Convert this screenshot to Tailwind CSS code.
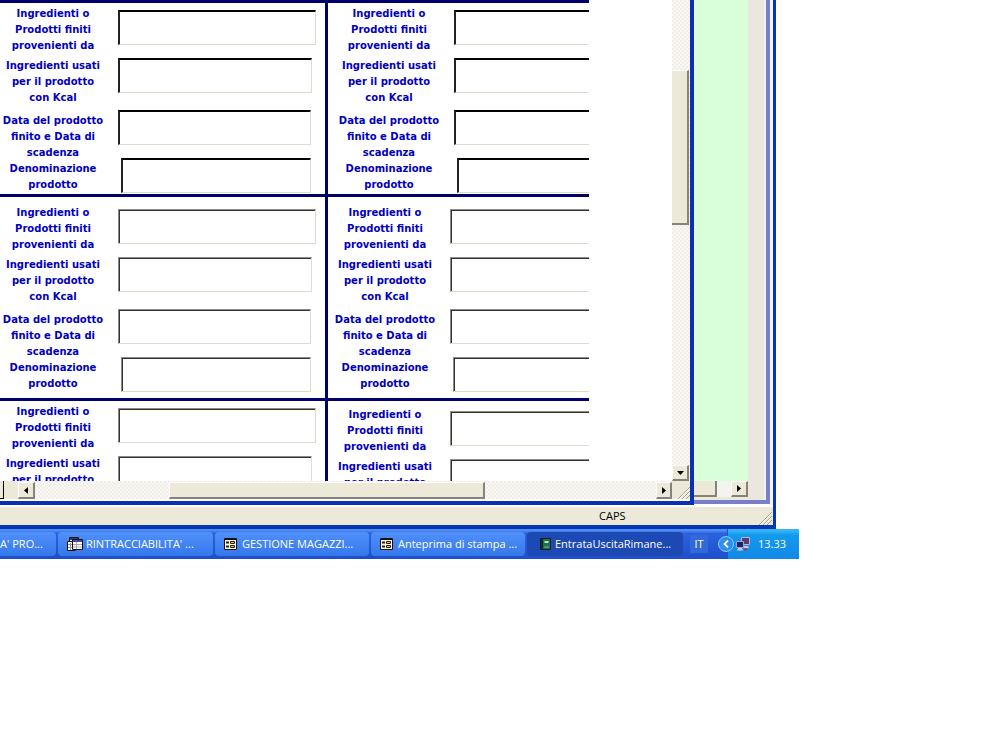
<!DOCTYPE html>
<html lang="it">
<head>
    <meta charset="UTF-8">
    <meta name="viewport" content="width=device-width, initial-scale=1.0">
    <title>EntrataUscitaRimanenze</title>
    <script src="https://cdn.jsdelivr.net/npm/@tailwindcss/browser@4"></script>
</head>
<body class="bg-white font-['Open_Sans',sans-serif] text-[11px] leading-4">

    <!-- Main window -->
    <div class="w-[77.6%] bg-white border-r-[3px] border-b-4 border-[#0536b4]">
        <div class="flex">

            <!-- Print preview window -->
            <div class="w-[89.8%] shrink-0 bg-white border-r-4 border-b-4 border-[#0a32b0]">
                <div class="flex h-[481px] overflow-hidden">
                    <div class="flex flex-1 overflow-hidden">
                        <div id="col-left" class="w-[328px] shrink-0 border-r-[3px] border-[#00006c]"></div>
                        <div id="col-right" class="w-[261px] shrink-0 overflow-hidden"></div>
                    </div>
                    <div class="w-[18px] pr-px flex flex-col bg-[repeating-conic-gradient(#f9f8f5_0_25%,#f0eee6_0_50%)] bg-size-[4px_4px]">
                        <div class="h-[70px]"></div>
                        <div class="h-[155px] bg-[#ece9d8] border-t border-t-white border-r-2 border-r-[#85837a] border-b-2 border-b-[#85837a]"></div>
                        <div class="flex-1"></div>
                        <button aria-label="Scorri in basso" class="h-4 bg-[#ece9d8] border-t border-t-white border-l border-l-white border-r-2 border-r-[#85837a] border-b-2 border-b-[#85837a] flex items-center justify-center">
                            <svg width="7" height="4" viewBox="0 0 7 4"><path d="M0 0h7L3.500 4z" fill="#000"/></svg>
                        </button>
                    </div>
                </div>
                <div class="flex h-[18px] bg-[repeating-conic-gradient(#f9f8f5_0_25%,#f0eee6_0_50%)] bg-size-[4px_4px]">
                    <div class="w-1 border-r border-b border-black bg-[#ece9d8]"></div>
                    <div class="w-[14px] bg-[#ece9d8]"></div>
                    <button aria-label="Scorri a sinistra" class="w-[17px] mt-px bg-[#ece9d8] border-t border-t-white border-l border-l-white border-r-2 border-r-[#85837a] border-b-2 border-b-[#85837a] flex items-center justify-center">
                        <svg width="4" height="7" viewBox="0 0 4 7"><path d="M4 0v7L0 3.500z" fill="#000"/></svg>
                    </button>
                    <div class="w-[134px]"></div>
                    <div class="w-[316px] mt-px bg-[#ece9d8] border-l border-l-white border-t border-t-white border-r-2 border-r-[#85837a] border-b-2 border-b-[#85837a]"></div>
                    <div class="flex-1"></div>
                    <button aria-label="Scorri a destra" class="w-4 mt-px bg-[#ece9d8] border-t border-t-white border-l border-l-white border-r-2 border-r-[#85837a] border-b-2 border-b-[#85837a] flex items-center justify-center">
                        <svg width="4" height="7" viewBox="0 0 4 7"><path d="M0 0v7l4-3.500z" fill="#000"/></svg>
                    </button>
                    <div class="w-[18px] bg-[#ece9d8] flex items-end justify-end">
                        <svg width="13" height="13" viewBox="0 0 13 13" fill="none"><path d="M1 13L13 1M5 13l8-8M9 13l4-4" stroke="#a5a292"/><path d="M2 13L13 2M6 13l7-7" stroke="#fff"/></svg>
                    </div>
                </div>
                <div class="h-[2px] bg-white"></div>
            </div>

            <!-- Form behind the preview -->
            <div class="flex-1 flex flex-col">
                <div class="flex-1 flex border-r-4 border-b-4 border-[#7a80c8]">
                    <div class="flex-1 flex flex-col bg-[#ece9d8]">
                        <div class="h-[481px] bg-[#d8ffd9]"></div>
                        <div class="h-4 flex bg-[#f4f3ee]">
                            <div class="w-[23px] bg-[#ece9d8] border-r-2 border-b-2 border-[#85837a]"></div>
                            <div class="flex-1"></div>
                            <button aria-label="Scorri a destra" class="w-[17px] bg-[#ece9d8] border-t border-t-white border-l border-l-white border-r-2 border-r-[#85837a] border-b-2 border-b-[#85837a] flex items-center justify-center">
                                <svg width="4" height="7" viewBox="0 0 4 7"><path d="M0 0v7l4-3.500z" fill="#000"/></svg>
                            </button>
                        </div>
                    </div>
                    <div class="w-4 bg-[#ebe7dc]"></div>
                    <div class="w-[2px] bg-[#f0effa]"></div>
                </div>
                <div class="h-px"></div>
            </div>
            <div class="w-[3px] bg-[#f4f6ff]"></div>
        </div>

        <!-- Status bar -->
        <div class="mt-[2px] h-[18px] bg-[#ece9d8] flex items-center">
            <span class="flex-1"></span>
            <span class="w-[159px] text-black">CAPS</span>
            <svg class="self-end" width="14" height="14" viewBox="0 0 14 14" fill="none"><path d="M1 14L14 1M5 14l9-9M9 14l5-5" stroke="#a5a292"/><path d="M2 14L14 2M6 14l8-8" stroke="#fff"/></svg>
            <span class="w-px"></span>
        </div>
    </div>

    <!-- Taskbar -->
    <div class="w-[79.9%] h-[30px] flex items-stretch text-white bg-linear-to-b from-[#4f8cf0] from-5% via-[#2a62de] via-15% to-[#1d4fcb] whitespace-nowrap">
        <button class="w-[56px] my-[3px] mr-[2px] rounded-r-sm bg-linear-to-b from-[#4f90fa] to-[#3578ec] text-left">A' PRO...</button>
        <button class="w-[155px] my-[3px] mr-[2px] pl-[9px] rounded-sm bg-linear-to-b from-[#4f90fa] to-[#3578ec] flex items-center gap-[3px]">
            <svg width="16" height="16" viewBox="0 0 16 16"><path d="M2.500 1.500h9v9h-9z" fill="#fff" stroke="#111"/><path d="M3 2h8v2H3z" fill="#223a90"/><path d="M.5 5.500h8v9h-8z" fill="#fff" stroke="#111"/><path d="M1 8.500h7M1 11.500h7M3.500 7v7" stroke="#999"/><path d="M5.500 3.500h10v10h-10z" fill="#fff" stroke="#111"/><path d="M6 4h9v2H6z" fill="#3a4fa0"/><path d="M6 8.500h9M6 11h9M9.500 6v7" stroke="#aaa"/></svg>
            RINTRACCIABILITA' ...
        </button>
        <button class="w-[154px] my-[3px] mr-[2px] pl-[9px] rounded-sm bg-linear-to-b from-[#4f90fa] to-[#3578ec] flex items-center gap-[4px]">
            <svg width="14" height="14" viewBox="0 0 14 14"><path d="M.5 1.500h12v11H.5z" fill="#fff6dc" stroke="#111"/><path d="M1 1h11v2H1z" fill="#111"/><path d="M2 5.500h3M2 9.500h3" stroke="#222" stroke-width="2"/><path d="M6.500 4.500h4v2h-4zM6.500 8.500h4v2h-4z" fill="#d8c070" stroke="#222"/></svg>
            GESTIONE MAGAZZI...
        </button>
        <button class="w-[154px] my-[3px] mr-[2px] pl-[9px] rounded-sm bg-linear-to-b from-[#4f90fa] to-[#3578ec] flex items-center gap-[4px]">
            <svg width="14" height="14" viewBox="0 0 14 14"><path d="M.5 1.500h12v11H.5z" fill="#fff6dc" stroke="#111"/><path d="M1 1h11v2H1z" fill="#111"/><path d="M2 5.500h3M2 9.500h3" stroke="#222" stroke-width="2"/><path d="M6.500 4.500h4v2h-4zM6.500 8.500h4v2h-4z" fill="#d8c070" stroke="#222"/></svg>
            Anteprima di stampa ...
        </button>
        <button class="w-[156px] my-[3px] pl-[13px] rounded-sm bg-[#1c49b4] flex items-center gap-[4px]">
            <svg width="11" height="12" viewBox="0 0 11 12"><path d="M.5.5h10v11H.5z" fill="#187058" stroke="#0a1a20"/><path d="M2 1v10" stroke="#0a1a20" stroke-width="1.500"/><path d="M4.500 3h4v2h-4z" fill="#b8e8b0"/><path d="M4 9h5" stroke="#5fc090"/></svg>
            EntrataUscitaRimane...
        </button>
        <div class="flex-1"></div>
        <div class="w-[18px] my-[6px] bg-[#3468d8] flex items-center justify-center">IT</div>
        <div class="w-[19px]"></div>
        <div class="relative w-[72px] bg-linear-to-b from-[#35b4f8] from-5% via-[#129aee] via-20% to-[#1388e6] border-l border-[#0f5cc4] flex items-center">
            <button aria-label="Mostra icone nascoste" class="absolute -left-[10px] top-[7px] w-4 h-4 rounded-full bg-[#2f8ff0] border border-[#8cc8ff] flex items-center justify-center">
                <svg width="6" height="8" viewBox="0 0 6 8" fill="none"><path d="M5 .5L1.500 4L5 7.500" stroke="#fff" stroke-width="1.800"/></svg>
            </button>
            <svg class="ml-[7px]" width="16" height="15" viewBox="0 0 16 15"><path d="M6.500.5h8v7h-8z" fill="#5a3a78" stroke="#b8b8d0"/><path d="M9 9h4l1 2H8z" fill="#c8c8d8"/><path d="M1.500 4.500h7v6h-7z" fill="#20206c" stroke="#a0a0c0"/><path d="M3 11h4l1 2.500H2z" fill="#c8c8d8"/><path d="M9 12l3-1v2l-3 1z" fill="#b03050"/></svg>
            <span class="ml-[7px]">13.33</span>
        </div>
    </div>

    <script>
        const fields = [
            { lines: "Ingredienti o<br>Prodotti finiti<br>provenienti da", label: "h-[52px]", input: "mt-[4px] ml-[12px] w-[198px]" },
            { lines: "Ingredienti usati<br>per il prodotto<br>con Kcal", label: "h-[52px]", input: "ml-[12px] w-[194px]" },
            { lines: "Data del prodotto<br>finito e Data di<br>scadenza", label: "h-[48px] pt-[3px]", input: "ml-[12px] w-[193px]" },
            { lines: "Denominazione<br>prodotto", label: "h-[35px] pt-[3px]", input: "ml-[15px] w-[190px]" }
        ];

        const dark = "border-t-2 border-t-black border-l-2 border-l-[#222]";
        const soft = "border-t border-t-[#8c8c84] border-l border-l-[#8c8c84] inset-shadow-[1px_1px_0_#333]";

        function addRecord(column, spacing, edge, count) {
            const id = column + document.getElementById(column).children.length;
            let rows = "";
            fields.slice(0, count).forEach((field, i) => {
                rows += `<div class="flex items-start">
                    <label for="${id}-${i}" class="w-[106px] shrink-0 text-center whitespace-nowrap ${field.label}">${field.lines}</label>
                    <input id="${id}-${i}" type="text" class="h-[35px] shrink-0 bg-white border-r border-r-[#dedbcf] border-b border-b-[#dedbcf] outline-none ${edge} ${field.input}">
                </div>`;
            });
            document.getElementById(column).insertAdjacentHTML("beforeend",
                `<div class="border-t-[3px] border-[#00006c] font-['Comic_Sans_MS','DejaVu_Sans',sans-serif] font-bold text-[10px] leading-4 text-[#0000c0] ${spacing}">${rows}</div>`);
        }

        addRecord("col-left", "pt-[3px] pb-px", dark, 4);
        addRecord("col-left", "pt-[8px] pb-[6px]", soft, 4);
        addRecord("col-left", "pt-[3px]", soft, 2);
        addRecord("col-right", "pt-[3px] pb-px pl-[8px]", dark, 4);
        addRecord("col-right", "pt-[8px] pb-[6px] pl-[4px]", soft, 4);
        addRecord("col-right", "pt-[6px] pl-[4px]", soft, 2);
    </script>

</body>
</html>
